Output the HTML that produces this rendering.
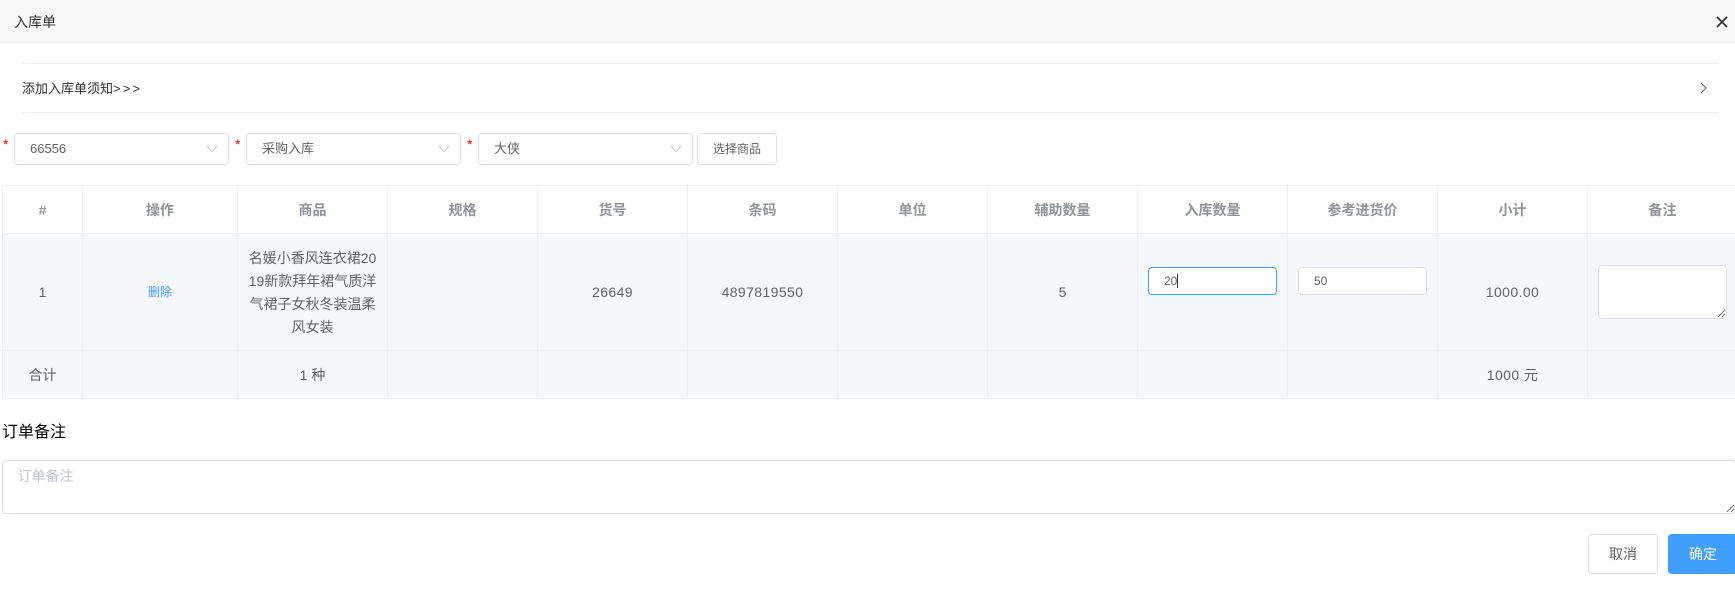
<!DOCTYPE html>
<html lang="zh-CN">
<head>
<meta charset="utf-8">
<title>入库单</title>
<style>
html,body{margin:0;padding:0;width:1735px;height:606px;overflow:hidden;background:#fff}
body{position:relative;font-family:"Liberation Sans","Noto Sans CJK SC",sans-serif;font-size:14px;color:#606266}
*{box-sizing:border-box}
.a{position:absolute}
.hd{left:0;top:0;width:1735px;height:43px;background:#f8f8f8;border-bottom:1px solid #ebeef5}
.line{left:22px;width:1696px;height:1px;background:#ebeef5}
.sel{height:32px;width:215px;top:133px;border:1px solid #dcdfe6;border-radius:4px;background:#fff;font-size:13px;line-height:29px;padding-left:15px;color:#606266}
.sel svg{position:absolute;right:10px;top:11px}
.star{top:136px;color:#f00;font-size:14px;line-height:16px;width:8px}
.btn{border:1px solid #dcdfe6;border-radius:4px;background:#fff;text-align:center}
table{position:absolute;left:2px;top:185px;border-collapse:separate;border-spacing:0;table-layout:fixed;width:1736px;border-top:1px solid #ebeef5;border-left:1px solid #ebeef5}
td,th{border-right:1px solid #ebeef5;border-bottom:1px solid #ebeef5;text-align:center;padding:0;font-size:14px;color:#606266;font-weight:normal}
th{height:48px;color:#909399;font-weight:bold;background:#fff}
td{background:#f5f7fa}
tr.r td{height:117px;line-height:23px}
tr.f td{height:48px}
.name{white-space:nowrap;position:relative;top:1px}
.n{letter-spacing:.4px}
.del{color:#409eff;font-size:12px}
input,textarea{position:absolute;margin:0;font-family:inherit;outline:none;background:#fff;color:#606266}
input{height:28px;width:129px;top:267px;border:1px solid #dcdfe6;border-radius:4px;font-size:12px;padding:0 15px}
textarea{border:1px solid #dcdfe6;border-radius:4px;font-size:14px;padding:5px 14.5px;line-height:20px}
textarea::placeholder{color:#c0c4cc}
</style>
</head>
<body>
<div class="a hd"></div>
<div class="a" style="left:14px;top:12px;line-height:20px;color:#303133">入库单</div>
<svg class="a" style="left:1716px;top:16px" width="12" height="12" viewBox="0 0 12 12"><path d="M1 1L11 11M11 1L1 11" stroke="#303133" stroke-width="1.7" fill="none"/></svg>

<div class="a line" style="top:63px"></div>
<div class="a" style="left:22px;top:79px;line-height:20px;color:#303133;font-size:13px">添加入库单须知<span style="letter-spacing:2.1px">&gt;&gt;&gt;</span></div>
<svg class="a" style="left:1700px;top:82px" width="7" height="12" viewBox="0 0 7 12"><path d="M1 1L6 6L1 11" stroke="#606266" stroke-width="1" fill="none"/></svg>
<div class="a line" style="top:112px"></div>

<div class="a star" style="left:3px">*</div>
<div class="a sel" style="left:14px">66556<svg width="12" height="8" viewBox="0 0 12 8"><path d="M1 1L6 6.5L11 1" stroke="#c0c4cc" stroke-width="1" fill="none"/></svg></div>
<div class="a star" style="left:235px">*</div>
<div class="a sel" style="left:246px">采购入库<svg width="12" height="8" viewBox="0 0 12 8"><path d="M1 1L6 6.5L11 1" stroke="#c0c4cc" stroke-width="1" fill="none"/></svg></div>
<div class="a star" style="left:467px">*</div>
<div class="a sel" style="left:478px">大侠<svg width="12" height="8" viewBox="0 0 12 8"><path d="M1 1L6 6.5L11 1" stroke="#c0c4cc" stroke-width="1" fill="none"/></svg></div>
<div class="a btn" style="left:697px;top:133px;width:80px;height:32px;font-size:12px;line-height:30px">选择商品</div>

<table>
<colgroup><col style="width:80px"><col style="width:155px"><col style="width:150px"><col style="width:150px"><col style="width:150px"><col style="width:150px"><col style="width:150px"><col style="width:150px"><col style="width:150px"><col style="width:150px"><col style="width:150px"><col style="width:150px"></colgroup>
<tr><th>#</th><th>操作</th><th>商品</th><th>规格</th><th>货号</th><th>条码</th><th>单位</th><th>辅助数量</th><th>入库数量</th><th>参考进货价</th><th>小计</th><th>备注</th></tr>
<tr class="r"><td>1</td><td><span class="del">删除</span></td><td><div class="name">名媛小香风连衣裙20<br>19新款拜年裙气质洋<br>气裙子女秋冬装温柔<br>风女装</div></td><td></td><td class="n">26649</td><td class="n">4897819550</td><td></td><td>5</td><td></td><td></td><td class="n">1000.00</td><td></td></tr>
<tr class="f"><td>合计</td><td></td><td>1 种</td><td></td><td></td><td></td><td></td><td></td><td></td><td></td><td class="n">1000 元</td><td></td></tr>
</table>

<input style="left:1148px;border-color:#409eff" value="20">
<div class="a" style="left:1177px;top:274px;width:1px;height:14px;background:#303133"></div>
<input style="left:1298px" value="50">
<textarea style="left:1598px;top:265px;width:129px;height:54px"></textarea>

<div class="a" style="left:2px;top:422px;font-size:16px;line-height:22px;color:#000">订单备注</div>
<textarea style="left:2px;top:460px;width:1734px;height:54px" placeholder="订单备注"></textarea>

<div class="a btn" style="left:1588px;top:534px;width:70px;height:40px;line-height:38px">取消</div>
<div class="a" style="left:1668px;top:534px;width:70px;height:40px;line-height:40px;background:#409eff;color:#fff;border-radius:4px;text-align:center">确定</div>
</body>
</html>
